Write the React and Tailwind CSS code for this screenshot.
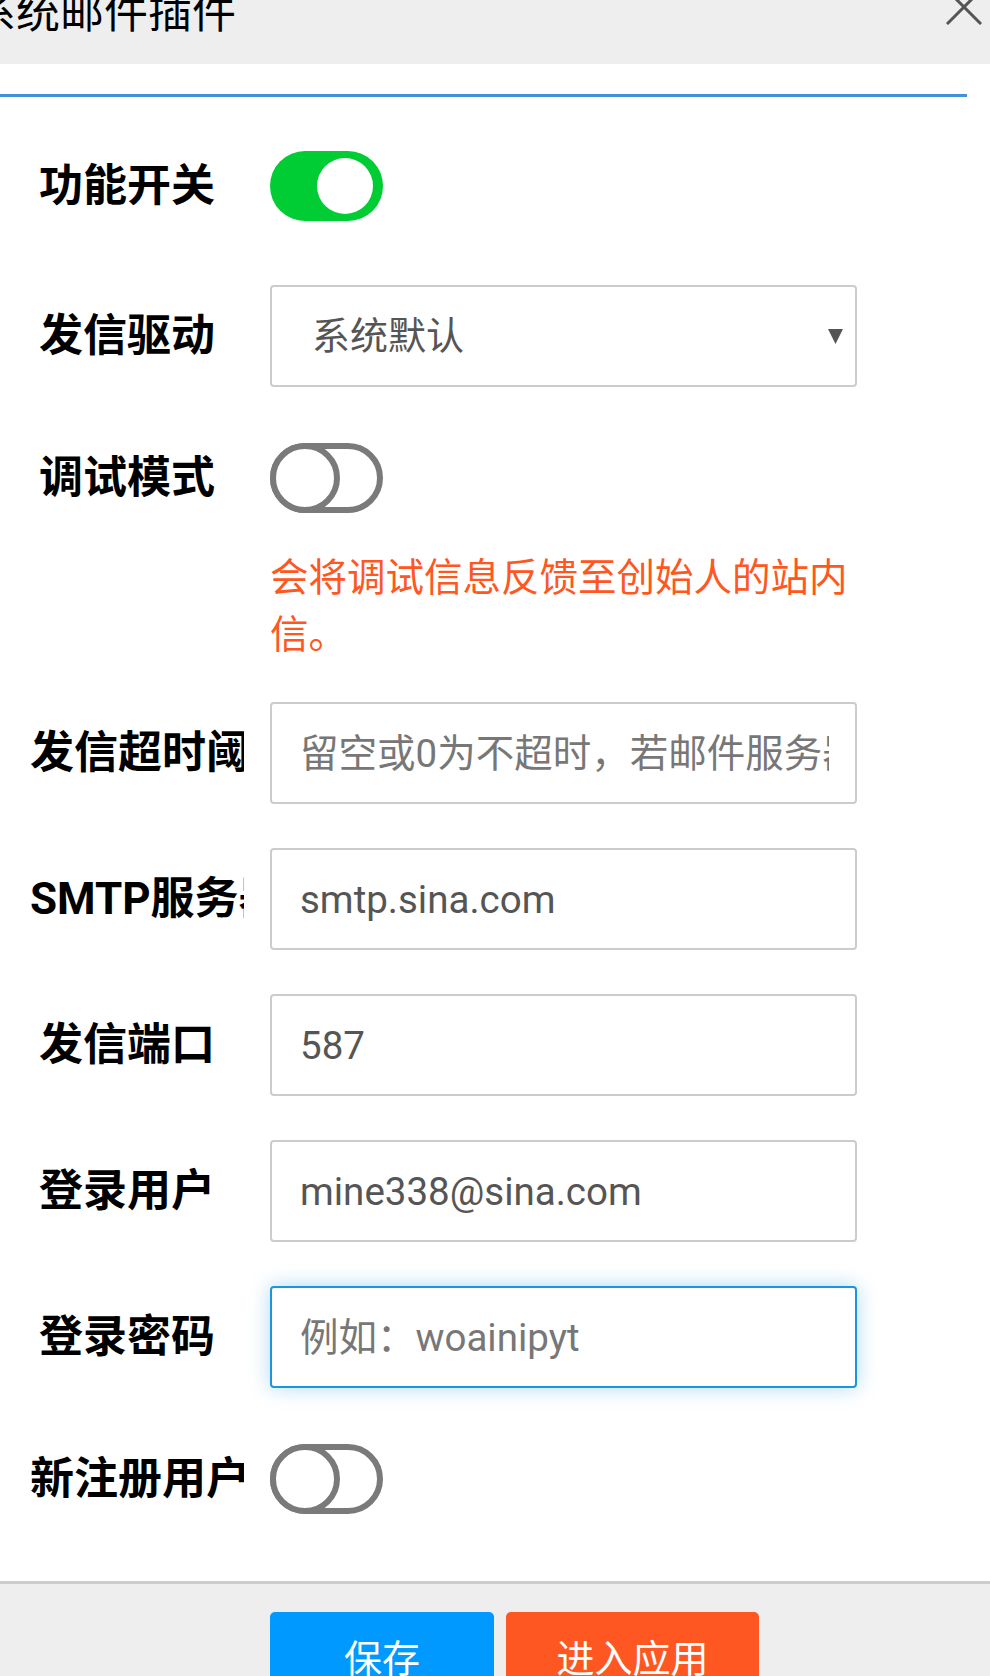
import React from 'react';

const inputRows = [
  { label: '发信超时阈值', placeholder: '留空或0为不超时，若邮件服务器响应慢请适当调大' },
  { label: 'SMTP服务器', value: 'smtp.sina.com' },
  { label: '发信端口', value: '587' },
  { label: '登录用户', value: 'mine338@sina.com' },
  { label: '登录密码', placeholder: '例如：woainipyt', focused: true },
];

export default function App() {
  return (
    <div className="h-[1676px] overflow-hidden bg-white font-['Roboto','Noto_Sans_CJK_SC',sans-serif]">
      {/* Title bar */}
      <header className="h-[64px] bg-[#eeeeee] flex items-start justify-between overflow-hidden">
        <div className="-ml-[28px] -mt-[9px] text-[44px] leading-none text-black whitespace-nowrap">系统邮件插件</div>
        <svg width="36" height="36" viewBox="0 0 36 36" className="-mt-[11px] mr-[8px] shrink-0">
          <path d="M1 1 L35 35 M35 1 L1 35" stroke="#555" strokeWidth="3" fill="none" />
        </svg>
      </header>

      <div className="mt-[30px] h-[3px] w-[967px] bg-[#4291d9]" />

      {/* Form */}
      <div className="pt-[42px] pb-[55px]">
        <div className="flex items-center h-[94px] mb-[52px]">
          <Label text="功能开关" />
          <div className="ml-[26px]">
            <Switch on />
          </div>
        </div>

        <div className="flex items-center h-[102px] mb-[44px]">
          <Label text="发信驱动" />
          <div className="ml-[26px] w-[587px] h-[102px] border-2 border-[#cccccc] rounded-[4px] flex items-center justify-between pl-[40px] pr-[12px]">
            <span className="text-[38px] text-[#555]">系统默认</span>
            <svg width="15" height="15" viewBox="0 0 15 15">
              <polygon points="0,0 15,0 7.5,15" fill="#555" />
            </svg>
          </div>
        </div>

        <div className="flex items-center h-[94px] mb-[24px]">
          <Label text="调试模式" />
          <div className="ml-[26px]">
            <Switch />
          </div>
        </div>

        <div className="ml-[270px] w-[587px] text-[38.5px] leading-[57px] text-[#ff5722] mb-[39px]">
          会将调试信息反馈至创始人的站内信。
        </div>

        {inputRows.map((r) => (
          <div key={r.label} className="flex items-center h-[102px] mb-[44px]">
            <Label text={r.label} />
            <input
              className={`ml-[26px] w-[587px] h-[102px] rounded-[4px] pl-[28px] pr-[26px] text-[38.5px] text-[#555] bg-white outline-none placeholder:text-[#777] ${
                r.focused
                  ? 'border-[2.5px] border-[#1a96dc] shadow-[0_0_20px_rgba(26,150,220,0.35)]'
                  : 'border-2 border-[#cccccc]'
              }`}
              defaultValue={r.value}
              placeholder={r.placeholder}
            />
          </div>
        ))}

        <div className="flex items-center h-[94px]">
          <Label text="新注册用户" />
          <div className="ml-[26px]">
            <Switch />
          </div>
        </div>
      </div>

      {/* Footer */}
      <footer className="border-t-[3px] border-[#cccccc] bg-[#eeeeee] pt-[28px] pb-[40px] flex gap-[12px] pl-[270px]">
        <button className="w-[224px] h-[94px] rounded-[5px] bg-[#0099ff] text-white text-[38px]">保存</button>
        <button className="w-[253px] h-[94px] rounded-[5px] bg-[#ff5722] text-white text-[38px]">进入应用</button>
      </footer>
    </div>
  );
}

function Label({ text }) {
  return (
    <div className="ml-[30px] w-[214px] shrink-0 pr-[29px] text-right text-[44px] font-bold text-black whitespace-nowrap overflow-hidden">
      {text}
    </div>
  );
}

function Switch({ on }) {
  if (on) {
    return (
      <div className="relative w-[113px] h-[70px] rounded-full bg-[#00cc33]">
        <span className="absolute right-[10px] top-[7px] w-[56px] h-[56px] rounded-full bg-white" />
      </div>
    );
  }
  return (
    <div className="relative w-[113px] h-[70px] rounded-full border-[6px] border-[#7a7a7a] bg-white">
      <span className="absolute -left-[6px] -top-[6px] w-[70px] h-[70px] rounded-full border-[6px] border-[#7a7a7a] bg-white" />
    </div>
  );
}
